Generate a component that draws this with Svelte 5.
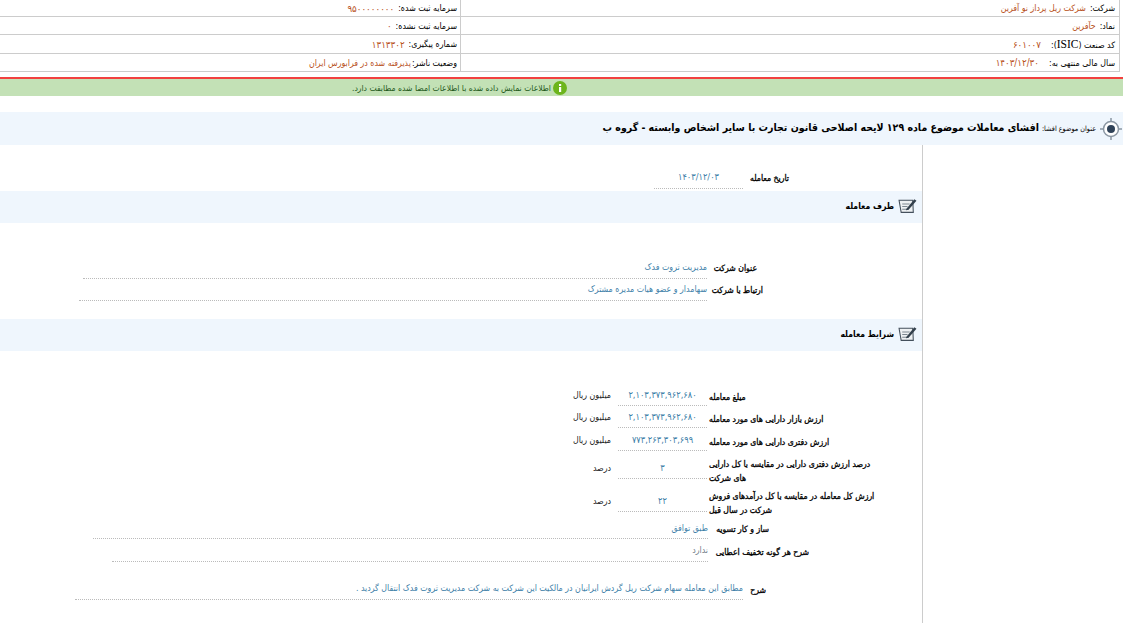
<script lang="ts">
	// ستون راست و چپ هدر
	const header = [
		{ h: 'h16', a: 'شرکت:', av: 'شرکت ریل پرداز نو آفرین', b: 'سرمایه ثبت شده:', bv: '۹۵۰۰۰۰۰۰۰۰', bnum: true },
		{ h: 'h18', a: 'نماد:', av: 'حآفرین', b: 'سرمایه ثبت نشده:', bv: '۰', bnum: true },
		{ h: 'h19', a: '', av: '۶۰۱۰۰۷', anum: true, isic: true, b: 'شماره پیگیری:', bv: '۱۳۱۳۳۰۲', bnum: true },
		{ h: 'h18', a: 'سال مالی منتهی به:', av: '۱۴۰۳/۱۲/۳۰', anum: true, wide: true, b: 'وضعیت ناشر:', bv: 'پذیرفته شده در فرابورس ایران', tight: true }
	];

	const amounts = [
		{ h: 'a22', label: 'مبلغ معامله', value: '۲,۱۰۳,۳۷۳,۹۶۲,۶۸۰', unit: 'میلیون ریال' },
		{ h: 'a22', label: 'ارزش بازار دارایی های مورد معامله', value: '۲,۱۰۳,۳۷۳,۹۶۲,۶۸۰', unit: 'میلیون ریال' },
		{ h: 'a23', label: 'ارزش دفتری دارایی های مورد معامله', value: '۷۷۳,۲۶۳,۳۰۳,۶۹۹', unit: 'میلیون ریال' },
		{ h: 'a28', label: 'درصد ارزش دفتری دارایی در مقایسه با کل دارایی های شرکت', value: '۳', unit: 'درصد' },
		{ h: 'a33', label: 'ارزش کل معامله در مقایسه با کل درآمدهای فروش شرکت در سال قبل', value: '۲۲', unit: 'درصد' }
	];
</script>

{#snippet noteIcon()}
	<svg class="note" viewBox="0 0 18 16" width="19" height="17">
		<path d="M1 3 L14 3 L14.5 14.5 L3 14.5 Z" fill="#eef1f3" stroke="#44505c" stroke-width="1" />
		<path d="M4 6.5h7M4 9h5M4 11.500h6" stroke="#7c8790" stroke-width="1" />
		<path d="M8 11 L15.500 2 L17.500 3.500 L10 12 L7.500 12.500 Z" fill="#33404c" />
	</svg>
{/snippet}

<div class="page" dir="rtl">
	<div class="top">
		{#each header as row}
			<div class="top-row {row.h}">
				<div class="cell right" class:wide={row.wide || row.isic}>
					{#if row.isic}
						<span>کد صنعت (<span class="isic">ISIC</span>):</span>
					{:else}
						<span>{row.a}</span>
					{/if}
					<span class="org" class:num={row.anum}>{row.av}</span>
				</div>
				<div class="cell left"><span>{row.b}</span><span class="org" class:num={row.bnum} class:tight={row.tight}>{row.bv}</span></div>
			</div>
		{/each}
	</div>

	<div class="red"></div>
	<div class="notice">
		<svg viewBox="0 0 14 14" width="14" height="14">
			<circle cx="7" cy="7" r="7" fill="#6cb51c" />
			<rect x="6" y="6" width="2.200" height="5" fill="#fff" />
			<rect x="6" y="3" width="2.200" height="2" fill="#fff" />
		</svg>
		<span>اطلاعات نمایش داده شده با اطلاعات امضا شده مطابقت دارد.</span>
	</div>

	<div class="title">
		<svg viewBox="0 0 24 24" width="24" height="24">
			<circle cx="12" cy="12" r="7.500" fill="#fff" stroke="#8b97a3" stroke-width="1.500" />
			<circle cx="12" cy="12" r="4" fill="#2f4258" />
			<path d="M12 1v4M12 19v4M1 12h4M19 12h4" stroke="#8b97a3" stroke-width="1.500" />
		</svg>
		<span class="small">عنوان موضوع افشا:</span>
		<span class="main">افشای معاملات موضوع ماده ۱۲۹ لایحه اصلاحی قانون تجارت با سایر اشخاص وابسته - گروه ب</span>
	</div>

	<div class="body">
		<aside></aside>
		<main>
			<div class="row date">
				<span class="label">تاریخ معامله</span>
				<span class="value center">۱۴۰۳/۱۲/۰۳</span>
			</div>

			<div class="band">
				{@render noteIcon()}
				<h3>طرف معامله</h3>
			</div>

			<div class="row company">
				<span class="label">عنوان شرکت</span>
				<span class="value">مدیریت ثروت فدک</span>
			</div>
			<div class="row relation">
				<span class="label">ارتباط با شرکت</span>
				<span class="value">سهامدار و عضو هیات مدیره مشترک</span>
			</div>

			<div class="band second">
				{@render noteIcon()}
				<h3>شرایط معامله</h3>
			</div>

			<div class="amounts">
				{#each amounts as a}
					<div class="amount {a.h}">
						<span class="amount-label">{a.label}</span>
						<span class="value center">{a.value}</span>
						<span class="unit">{a.unit}</span>
					</div>
				{/each}
			</div>

			<div class="row settle">
				<span class="label">ساز و کار تسویه</span>
				<span class="value">طبق توافق</span>
			</div>
			<div class="row discount">
				<span class="label">شرح هر گونه تخفیف اعطایی</span>
				<span class="value gray">ندارد</span>
			</div>
			<div class="row desc">
				<span class="label">شرح</span>
				<span class="value">مطابق این معامله سهام شرکت ریل گردش ایرانیان در مالکیت این شرکت به شرکت مدیریت ثروت فدک انتقال گردید .</span>
			</div>
		</main>
	</div>
</div>

<style>
	:global(body) {
		margin: 0;
		background: #fff;
	}

	.page {
		width: 1123px;
		height: 623px;
		overflow: hidden;
		font-family: "DejaVu Sans Condensed", "DejaVu Sans", sans-serif;
		font-stretch: condensed;
		font-size: 8.75px;
		color: #000;
	}

	.top {
		padding-right: 3px;
	}

	.top-row {
		display: flex;
		border-bottom: 1px solid #ccc;
		box-sizing: border-box;
	}

	.h16 { height: 17px; }
	.h18 { height: 18px; }
	.h19 { height: 19px; }

	.cell {
		display: flex;
		align-items: center;
		gap: 4px;
		padding-right: 4px;
		box-sizing: border-box;
	}

	.cell.left {
		padding-right: 3px;
	}

	.cell.right {
		width: 660px;
		border-right: 1px solid #ccc;
		border-left: 1px solid #ccc;
	}

	.cell.right.wide {
		gap: 10px;
	}

	.isic {
		font-family: "Liberation Serif", serif;
		font-size: 11.500px;
	}

	.org {
		color: #b8511c;
	}

	.org.num {
		font-size: 9.7px;
	}

	.org.tight {
		margin-right: -3px;
	}

	.red {
		height: 2px;
		margin-top: 5px;
		background: #f2413f;
	}

	.notice {
		height: 17px;
		display: flex;
		align-items: center;
		gap: 2px;
		padding-right: 556px;
		font-size: 8.5px;
		background: #c3e1b6;
		box-sizing: border-box;
		color: #24591c;
	}

	.title {
		display: flex;
		align-items: center;
		gap: 3px;
		height: 33px;
		margin-top: 16px;
		background: #eff6fd;
	}

	.title .small {
		font-size: 7.2px;
	}

	.title .main {
		font-size: 10.5px;
		font-weight: bold;
		padding-bottom: 3px;
	}

	.body {
		display: flex;
	}

	aside {
		width: 200px;
		height: 478px;
		border-left: 1px solid #ccc;
		flex: none;
	}

	main {
		flex: 1;
		padding-top: 23px;
	}

	.row {
		display: flex;
		align-items: flex-start;
		height: 21px;
	}

	.label {
		font-size: 8.6px;
		-webkit-text-stroke: 0.3px #000;
		white-space: nowrap;
		line-height: 21px;
		flex: none;
	}

	.value {
		color: #4080a8;
		border-bottom: 1px dotted #bbb;
		height: 21px;
		line-height: 18px;
		box-sizing: border-box;
		flex: none;
	}

	.value.center {
		font-size: 9.2px;
		line-height: 19px;
		text-align: center;
	}

	.value.gray {
		color: #74808a;
	}

	.date {
		margin-right: 133px;
	}

	.date .label {
		width: 46px;
	}

	.date .value {
		width: 89px;
		line-height: 18px;
	}

	.note {
		margin-top: -3px;
	}

	.band {
		display: flex;
		align-items: center;
		gap: 4px;
		height: 32px;
		margin-top: 2px;
		padding-right: 5px;
		background: #eff6fd;
	}

	.band.second {
		margin-top: 18px;
	}

	.band h3 {
		margin: 0;
		padding-bottom: 3px;
		font-size: 8.6px;
	}

	.company {
		margin-right: 165px;
		margin-top: 35px;
	}

	.company .label {
		width: 50px;
	}

	.company .value {
		width: 624px;
	}

	.relation {
		margin-right: 159px;
		margin-top: 1px;
	}

	.relation .label {
		width: 56px;
	}

	.relation .value {
		width: 628px;
	}

	.amounts {
		margin-top: 33px;
		margin-right: 41px;
	}

	.amount {
		display: flex;
		align-items: flex-end;
	}

	.a22 { height: 22px; }
	.a23 { height: 23px; }
	.a28 { height: 28px; }
	.a33 { height: 33px; }

	.amount-label {
		width: 172px;
		font-size: 8.6px;
		-webkit-text-stroke: 0.3px #000;
		text-align: left;
		line-height: 14px;
		flex: none;
		align-self: center;
		padding-top: 4px;
	}

	.a23 .amount-label { padding-top: 5px; }
	.a28 .amount-label { padding-top: 12px; }
	.a33 .amount-label { padding-top: 14px; }

	.amount .value {
		width: 89px;
		margin-right: 2px;
	}

	.unit {
		padding-right: 7px;
		line-height: 21px;
		color: #222;
		white-space: nowrap;
	}

	.settle {
		margin-right: 153px;
		margin-top: 6px;
	}

	.settle .label {
		width: 61px;
		line-height: 23px;
	}

	.settle .value {
		width: 615px;
		line-height: 20px;
	}

	.discount {
		margin-right: 113px;
		margin-top: 2px;
	}

	.discount .label {
		width: 101px;
		line-height: 22px;
	}

	.discount .value {
		width: 596px;
		line-height: 19px;
	}

	.desc {
		margin-right: 156px;
		margin-top: 17px;
	}

	.desc .label {
		width: 23px;
		line-height: 22px;
	}

	.desc .value {
		width: 668px;
		line-height: 19px;
	}
</style>
